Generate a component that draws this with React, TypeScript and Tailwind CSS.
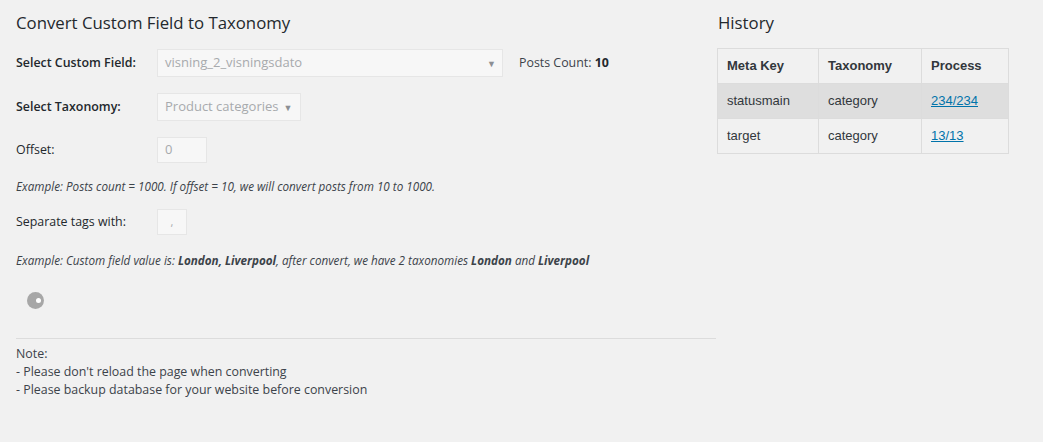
import React from "react";

const sans = { fontFamily: '"Open Sans", "Noto Sans", sans-serif' };

function Caret() {
  return <span className="text-[9px] text-[#8c8f94] leading-none">▼</span>;
}

export default function App() {
  return (
    <div className="w-[1043px] h-[442px] bg-[#f1f1f1] text-[#23282d] flex overflow-hidden" style={sans}>
      <div className="w-[717px] pl-4 shrink-0">
        <h2 className="text-[16.8px] leading-6 mt-[11px] font-medium text-[#23282d]">Convert Custom Field to Taxonomy</h2>

        <div className="flex items-center mt-[14px] h-[28px]">
          <div className="w-[141px] text-[12.4px] font-semibold">Select Custom Field:</div>
          <div className="w-[346px] h-[28px] border border-[#e6e6e6] bg-[#f7f7f7] flex items-center justify-between pl-[7px] pr-[6px] text-[13px] text-[#a7aaad]">
            <span>visning_2_visningsdato</span>
            <Caret />
          </div>
          <div className="ml-[16px] text-[12.4px] text-[#3c434a]">
            Posts Count: <span className="font-bold text-[#23282d]">10</span>
          </div>
        </div>

        <div className="flex items-center mt-[16px] h-[28px]">
          <div className="w-[141px] text-[12.4px] font-semibold">Select Taxonomy:</div>
          <div className="w-[144px] h-[28px] border border-[#e6e6e6] bg-[#f7f7f7] flex items-center gap-[5px] pl-[7px] text-[13px] text-[#a7aaad]">
            <span>Product categories</span>
            <Caret />
          </div>
        </div>

        <div className="flex items-center mt-[16px] h-[26px]">
          <div className="w-[141px] text-[12.4px]">Offset:</div>
          <div className="w-[50px] h-[26px] border border-[#e6e6e6] bg-[#f7f7f7] flex items-center pl-[7px] text-[13px] text-[#a7aaad]">0</div>
        </div>

        <p className="mt-[15px] text-[11.7px] italic leading-4 text-[#3c434a]">
          Example: Posts count = 1000. If offset = 10, we will convert posts from 10 to 1000.
        </p>

        <div className="flex items-center mt-[15px] h-[26px]">
          <div className="w-[141px] text-[12.4px]">Separate tags with:</div>
          <div className="w-[30px] h-[26px] border border-[#e6e6e6] bg-[#f7f7f7] flex items-center justify-center text-[11px] text-[#a7aaad]">,</div>
        </div>

        <p className="mt-[17px] text-[11.7px] italic leading-4 text-[#3c434a]">
          Example: Custom field value is: <b>London, Liverpool</b>, after convert, we have 2 taxonomies <b>London</b> and <b>Liverpool</b>
        </p>

        <div className="mt-[24px] ml-[11px] w-[17px] h-[17px] rounded-full bg-[#a7a7a7] flex items-center justify-end pr-[3px]">
          <div className="w-[5px] h-[5px] rounded-full bg-white" />
        </div>

        <div className="mt-[29px] border-t border-[#dcdcdc] w-[700px]" />

        <div className="mt-[6px] text-[12.4px] leading-[18px] text-[#3c434a]">
          <div>Note:</div>
          <div>- Please don't reload the page when converting</div>
          <div>- Please backup database for your website before conversion</div>
        </div>
      </div>

      <div className="flex-1">
        <h2 className="text-[16.8px] leading-6 mt-[11px] ml-[1px] font-medium text-[#23282d]">History</h2>
        <table
          className="mt-[13px] border-collapse border border-[#dcdcdc] text-[13px] text-[#32373c]"
          style={{ fontFamily: '"Liberation Sans", Arial, sans-serif' }}
        >
          <thead>
            <tr className="h-[35px]">
              <th className="w-[101px] border border-[#dcdcdc] text-left font-bold pl-[9px]">Meta Key</th>
              <th className="w-[103px] border border-[#dcdcdc] text-left font-bold pl-[9px]">Taxonomy</th>
              <th className="w-[87px] border border-[#dcdcdc] text-left font-bold pl-[9px]">Process</th>
            </tr>
          </thead>
          <tbody>
            <tr className="h-[35px] bg-[#dedede]">
              <td className="border-x border-[#dcdcdc] pl-[9px]">statusmain</td>
              <td className="border-x border-[#dcdcdc] pl-[9px]">category</td>
              <td className="border-x border-[#dcdcdc] pl-[9px]">
                <a className="underline text-[#0073aa]" href="#">234/234</a>
              </td>
            </tr>
            <tr className="h-[35px]">
              <td className="border border-[#dcdcdc] pl-[9px]">target</td>
              <td className="border border-[#dcdcdc] pl-[9px]">category</td>
              <td className="border border-[#dcdcdc] pl-[9px]">
                <a className="underline text-[#0073aa]" href="#">13/13</a>
              </td>
            </tr>
          </tbody>
        </table>
      </div>
    </div>
  );
}
